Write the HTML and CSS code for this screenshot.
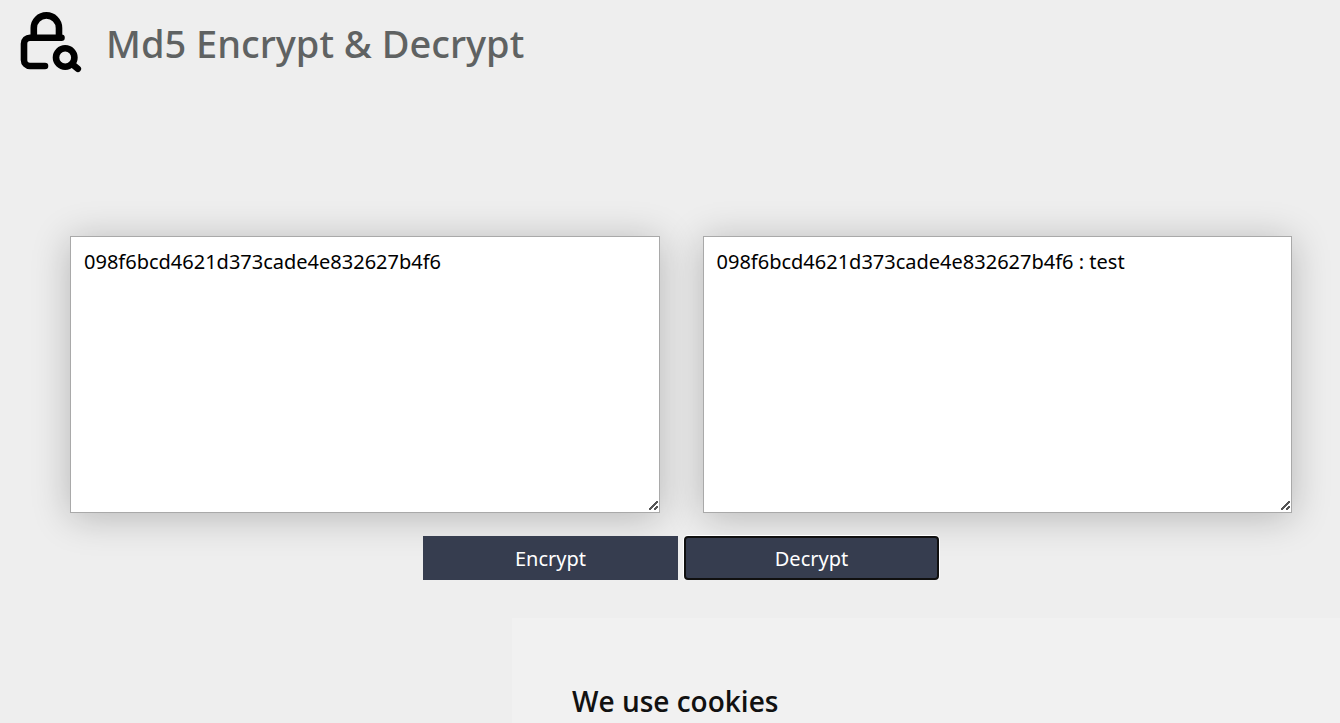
FILE: index.html
```
<!DOCTYPE html>
<html lang="en">
<head>
    <meta charset="UTF-8">
    <meta name="viewport" content="width=device-width, initial-scale=1.0">
    <title>Md5 Encrypt &amp; Decrypt</title>
    <link rel="stylesheet" href="styles.css">
</head>
<body>
    <header class="header">
        <svg class="logo" viewBox="0 0 64 64" aria-hidden="true">
            <g fill="none" stroke="#000" stroke-width="6.600" stroke-linecap="round" stroke-linejoin="round">
                <path d="M15.800 27V18a12.600 12.600 0 0 1 25.200 0V27"/>
                <path d="M43.500 27.700H12a6 6 0 0 0-6 6V50a6 6 0 0 0 6 6h15"/>
                <circle cx="47.200" cy="47.500" r="9.200"/>
                <path d="M54 54l5.800 4.800"/>
            </g>
        </svg>
        <h1 class="title">Md5 Encrypt &amp; Decrypt</h1>
    </header>
    <main>
        <form class="converter">
            <div class="fields">
                <textarea class="text-box" aria-label="Input" spellcheck="false">098f6bcd4621d373cade4e832627b4f6</textarea>
                <textarea class="text-box" aria-label="Result" spellcheck="false">098f6bcd4621d373cade4e832627b4f6 : test</textarea>
            </div>
            <div class="actions">
                <button class="btn" type="button">Encrypt</button>
                <button class="btn btn-active" type="button">Decrypt</button>
            </div>
        </form>
    </main>
    <section class="cookie-banner">
        <h2 class="cookie-title">We use cookies</h2>
    </section>
</body>
</html>
```

FILE: styles.css
```
* {
    box-sizing: border-box;
}
body {
    margin: 0;
    background-color: #eee;
    font-family: "Noto Sans", sans-serif;
}
.header {
    display: flex;
    align-items: center;
    gap: 24px;
    padding: 10px 18px;
}
.logo {
    width: 64px;
    height: 64px;
}
.title {
    margin: 0;
    padding-top: 2px;
    font-size: 38px;
    line-height: 62px;
    font-weight: 500;
    color: #5f6262;
}
.converter {
    padding: 152px 48px 0 70px;
}
.fields {
    display: flex;
    gap: 43px;
}
.text-box {
    flex: 1;
    min-width: 0;
    height: 277px;
    padding: 12px 13px;
    border: 1px solid #a9a9a9;
    background-color: #fff;
    box-shadow: 0 4px 36px rgba(0, 0, 0, 0.24);
    font-family: inherit;
    font-size: 20px;
    line-height: 26px;
    color: #000;
    resize: both;
    outline: none;
}
/* Two diagonal grip lines */
.text-box::-webkit-resizer {
    background-image:
        linear-gradient(135deg, transparent 42%, #555 42%, #555 58%, transparent 58%),
        linear-gradient(135deg, transparent 34%, #555 34%, #555 66%, transparent 66%);
    background-size: 9px 9px, 4px 4px;
    background-position: 5px 4px, 10px 9px;
    background-repeat: no-repeat;
}
.actions {
    display: flex;
    justify-content: center;
    gap: 6px;
    margin-top: 23px;
    position: relative;
}
.btn {
    width: 255px;
    height: 44px;
    border: none;
    background-color: #363d4f;
    color: #fff;
    font-family: inherit;
    font-size: 20px;
    cursor: pointer;
}
.btn-active {
    border: 2px solid #101010;
    border-radius: 4px;
    box-shadow: 0 0 0 1px #fff;
}
.cookie-banner {
    position: fixed;
    right: 0;
    bottom: 0;
    width: 828px;
    max-width: 100%;
    padding: 64px 60px 0;
    height: 105px;
    background-color: #f1f1f1;
}
.cookie-title {
    margin: 0;
    font-family: "Open Sans", sans-serif;
    font-size: 28px;
    line-height: 38px;
    font-weight: 600;
    color: #111;
}
```
